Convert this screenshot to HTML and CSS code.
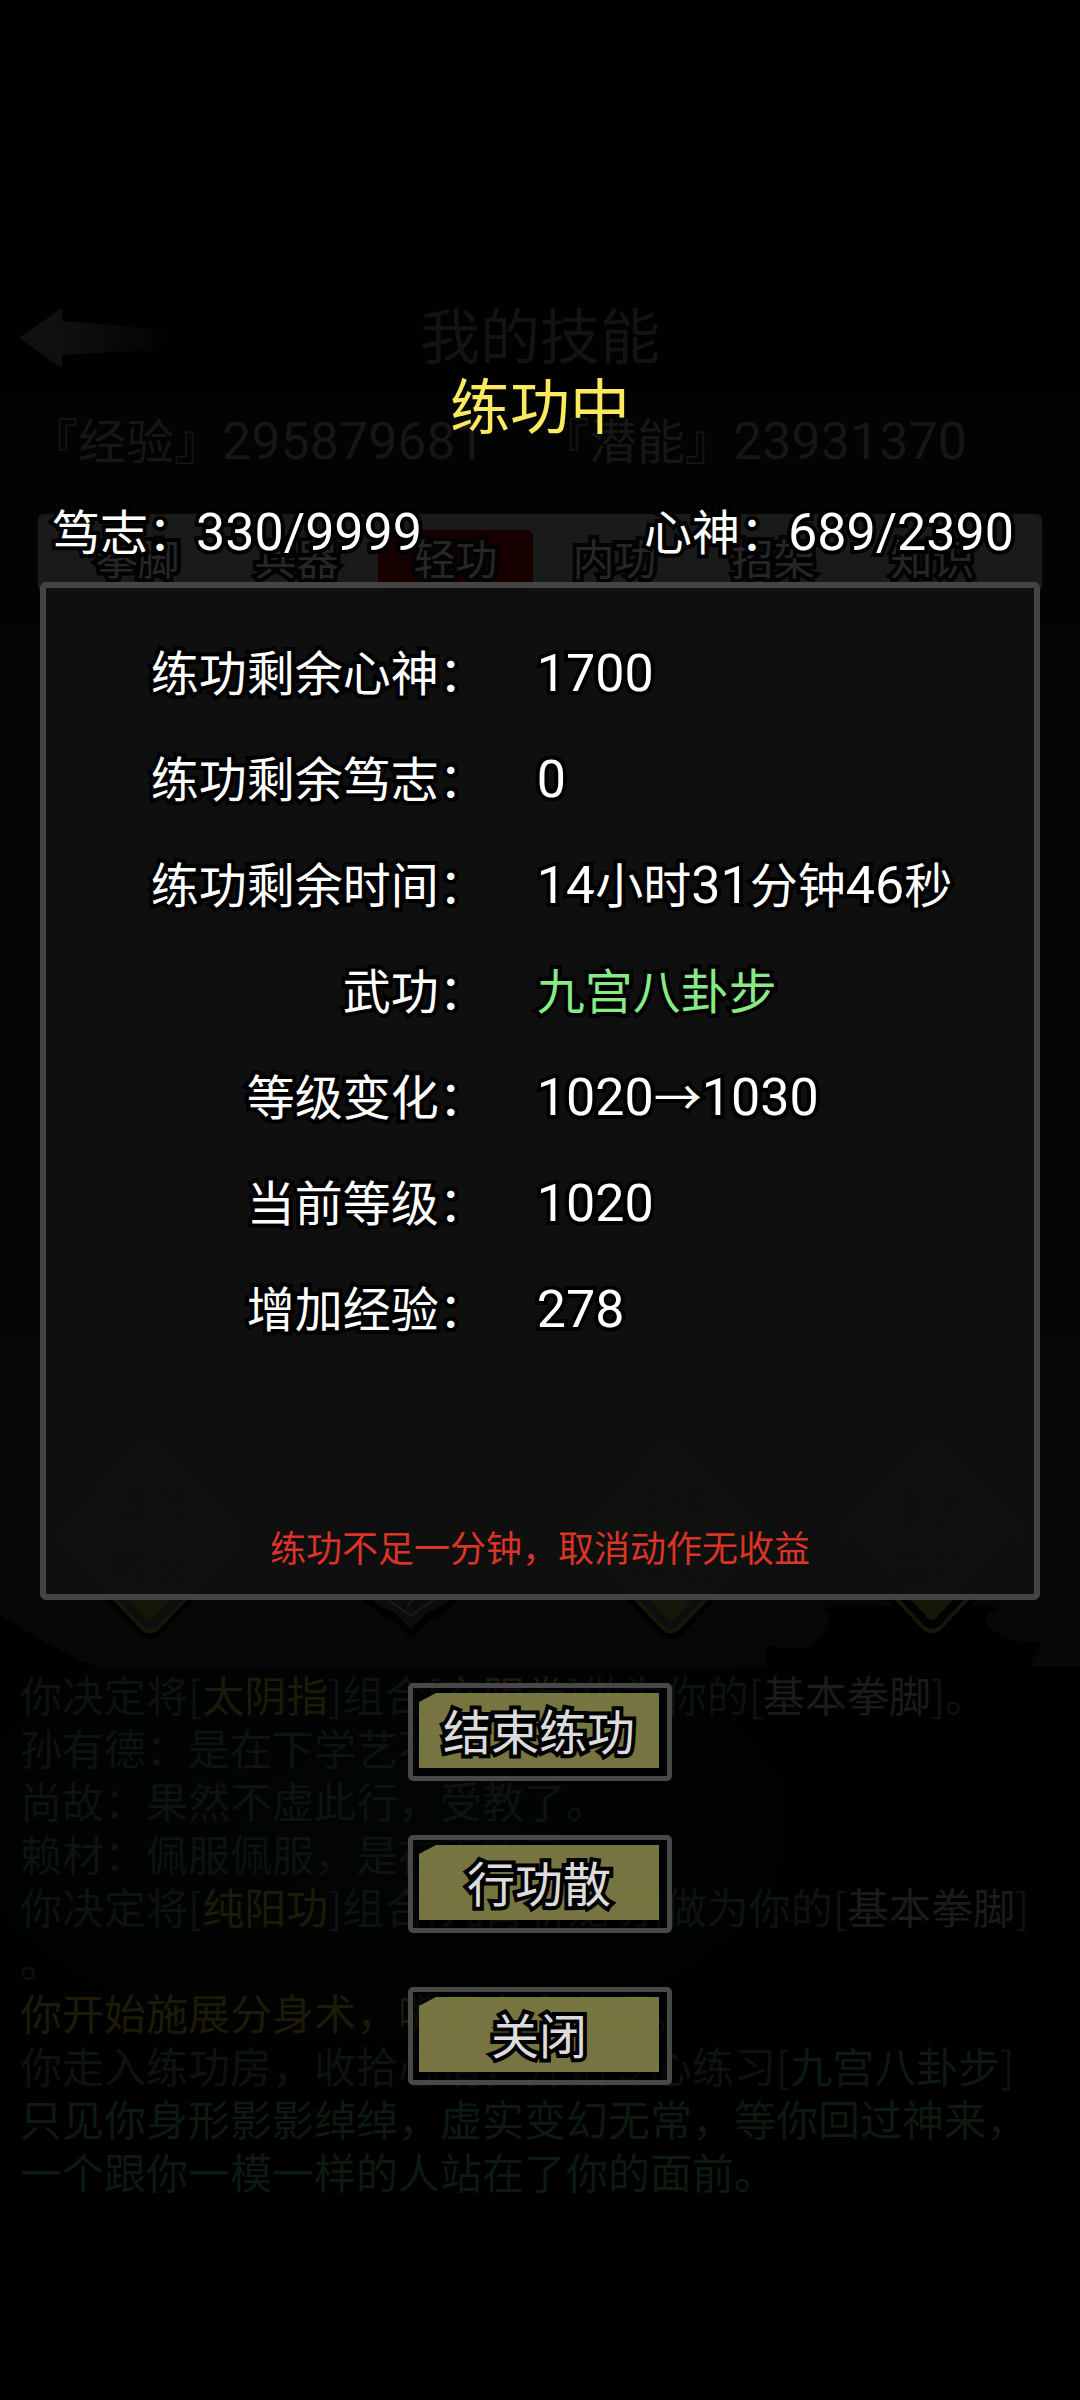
FILE: index.html
```html
<!DOCTYPE html>
<html lang="zh-CN">
	<head>
		<meta charset="UTF-8" />
		<meta name="viewport" content="width=device-width, initial-scale=1.0" />
		<title>练功中</title>
		<link rel="stylesheet" href="styles.css">
	</head>
	<body>
		<div class="game">
			<header class="topbar">
				<a class="back" href="#" aria-label="返回">
					<svg width="150" height="64" viewBox="0 0 150 64">
						<defs>
							<linearGradient id="fade" x1="0" x2="1" y1="0" y2="0">
								<stop offset="0.3" stop-color="#101010" />
								<stop offset="1" stop-color="#020202" />
							</linearGradient>
						</defs>
						<path d="M1 32 L44 2 V15 L146 23 V43 L44 49 V62 Z" fill="url(#fade)" />
					</svg>
				</a>
				<h1>我的技能</h1>
			</header>

			<main class="skills">
				<!-- hills and roof in front of the sky -->
				<svg class="scenery" viewBox="0 0 1080 60" preserveAspectRatio="none">
					<path d="M0 8 L36 30 L80 54 L96 60 H0 Z M766 38 Q790 44 812 40 Q826 26 830 8 L824 0 H1000 L984 10 Q990 34 1040 36 L1030 60 H766 Z" fill="#000" />
				</svg>
				<div class="points">
					<span>『经验』<span class="num">295879681</span></span>
					<span>『潜能』<span class="num">23931370</span></span>
				</div>
				<nav class="tabs">
					<a href="#">拳脚</a>
					<a href="#">兵器</a>
					<a class="active" href="#">轻功</a>
					<a href="#">内功</a>
					<a href="#">招架</a>
					<a href="#">知识</a>
				</nav>
				<table class="list">
					<tr><td>基本轻功</td><td>盖世无双</td><td>1100级</td></tr>
					<tr><td>九宫八卦步</td><td>万夫莫当</td><td>1020级</td></tr>
					<tr><td>无影幻</td><td>盖世无双</td><td>1100级</td></tr>
					<tr><td>千里行</td><td>盖世无双</td><td>1100级</td></tr>
					<tr><td>借步七星</td><td>一代宗师</td><td>1000级</td></tr>
					<tr><td>烟云飘渺步法</td><td>炉火纯青</td><td>980级</td></tr>
					<tr><td>流云随星身法</td><td>初窥门径</td><td>1级</td></tr>
				</table>
				<div class="actions">
					<a class="diamond" href="#">
						<svg viewBox="0 0 200 208"><path d="M92 6 Q100 0 108 6 L194 96 Q200 104 194 112 L110 200 Q100 208 90 200 L6 112 Q0 104 6 96 Z" fill="#161709" stroke="#000" stroke-width="5" /><path d="M14 104 L93 189 Q100 196 107 189 L186 104" fill="none" stroke="#0e0e0c" stroke-width="8" /></svg>
						<span>请师<br>教父</span>
					</a>
					<a class="diamond" href="#">
						<svg viewBox="0 0 200 208"><path d="M100 4 Q130 50 186 104 Q150 175 118 184 L100 202 L82 184 Q50 175 14 104 Q70 50 100 4 Z" fill="#0b0c0c" stroke="#000" stroke-width="7" /><path d="M74 166 L100 184 L126 166 M96 176 L104 164" fill="none" stroke="#191a1c" stroke-width="2" /></svg>
						<span>突<br>破</span>
					</a>
					<a class="diamond" href="#">
						<svg viewBox="0 0 200 208"><path d="M92 6 Q100 0 108 6 L194 96 Q200 104 194 112 L110 200 Q100 208 90 200 L6 112 Q0 104 6 96 Z" fill="#161709" stroke="#000" stroke-width="5" /><path d="M14 104 L93 189 Q100 196 107 189 L186 104" fill="none" stroke="#0e0e0c" stroke-width="8" /></svg>
						<span>正练<br>在功</span>
					</a>
					<a class="diamond" href="#">
						<svg viewBox="0 0 200 208"><path d="M92 6 Q100 0 108 6 L194 96 Q200 104 194 112 L110 200 Q100 208 90 200 L6 112 Q0 104 6 96 Z" fill="#161709" stroke="#000" stroke-width="5" /><path d="M14 104 L93 189 Q100 196 107 189 L186 104" fill="none" stroke="#020202" stroke-width="8" /></svg>
						<span>准武<br>备功</span>
					</a>
				</div>
			</main>

			<div class="log">
				<p>你决定将[<b class="gold">太阴指</b>]组合[<b class="gold">玄阴拳</b>]做为你的[<b class="gray">基本拳脚</b>]。</p>
				<p>孙有德：是在下学艺不精。</p>
				<p>尚故：果然不虚此行，受教了。</p>
				<p>赖材：佩服佩服，是在下输了。</p>
				<p>你决定将[<b class="gold">纯阳功</b>]组合[<b class="gold">九霄斩龙功</b>]做为你的[<b class="gray">基本拳脚</b>]。</p>
				<p class="gold">你开始施展分身术，嘴里念念有词。</p>
				<p>你走入练功房，收拾心情，开始专心练习[<b class="green">九宫八卦步</b>]</p>
				<p class="green">只见你身形影影绰绰，虚实变幻无常，等你回过神来，一个跟你一模一样的人站在了你的面前。</p>
			</div>
		</div>

		<div class="overlay" role="dialog" aria-labelledby="title">
			<h2 id="title">练功中</h2>
			<div class="stats">
				<span>笃志：<span class="num">330/9999</span></span>
				<span>心神：<span class="num">689/2390</span></span>
			</div>
			<div class="panel">
				<dl>
					<dt>练功剩余心神：</dt>
					<dd><span class="num">1700</span></dd>
					<dt>练功剩余笃志：</dt>
					<dd><span class="num">0</span></dd>
					<dt>练功剩余时间：</dt>
					<dd><span class="num">14</span>小时<span class="num">31</span>分钟<span class="num">46</span>秒</dd>
					<dt>武功：</dt>
					<dd class="skill">九宫八卦步</dd>
					<dt>等级变化：</dt>
					<dd><span class="num">1020</span>→<span class="num">1030</span></dd>
					<dt>当前等级：</dt>
					<dd><span class="num">1020</span></dd>
					<dt>增加经验：</dt>
					<dd><span class="num">278</span></dd>
				</dl>
				<p class="warning">练功不足一分钟，取消动作无收益</p>
			</div>
			<div class="buttons">
				<button type="button"><span>结束练功</span></button>
				<button type="button"><span>行功散</span></button>
				<button type="button"><span>关闭</span></button>
			</div>
		</div>
	</body>
</html>
```

FILE: styles.css
```css
* {
	box-sizing: border-box;
}
body {
	position: relative;
	margin: 0;
	min-height: 100vh;
	background-color: #000;
	color: #fff;
	font-family: "Noto Sans CJK SC", sans-serif;
	font-size: 48px;
	line-height: 72px;
}
h1,
h2,
p,
dl,
dd {
	margin: 0;
}
h1,
h2,
b {
	font-weight: normal;
}
a {
	color: inherit;
	text-decoration: none;
}
.num {
	font-family: Roboto, sans-serif;
	font-size: 52px;
	line-height: 1;
}

/* Dimmed game screen */
.game {
	padding-top: 285px;
	color: #161616;
}
.topbar {
	display: grid;
	grid-template-columns: 1fr auto 1fr;
	align-items: center;
	height: 107px;
	padding: 0 18px;
	border-bottom: 2px solid #000;
	background-color: #010101;
}
.back svg {
	display: block;
}
.topbar h1 {
	padding-bottom: 10px;
	font-size: 60px;
	color: #131313;
}
.skills {
	position: relative;
	background: linear-gradient(#020303, #030505 60%, #060808);
}
.points {
	display: flex;
	gap: 56px;
	height: 122px;
	padding: 10px 30px;
	white-space: nowrap;
}
.tabs {
	display: grid;
	grid-template-columns: repeat(6, 1fr);
	gap: 4px;
	height: 78px;
	margin: 0 38px;
	padding: 16px 32px 0 22px;
	border-radius: 6px;
	background-color: #1a1a1a;
	color: #262626;
	font-size: 42px;
	line-height: 53px;
	text-align: center;
	-webkit-text-stroke: 8px #030303;
	paint-order: stroke fill;
}
.tabs .active {
	border-radius: 6px;
	background-color: #160000;
}
.list {
	width: 100%;
	height: 560px;
	margin: 32px 0 246px;
	padding: 0 60px 0 86px;
	border-spacing: 0;
	color: #070707;
}
.list td {
	padding: 0;
	width: 40%;
}
.list td:last-child {
	width: 20%;
	text-align: right;
}
.actions {
	position: relative;
	display: grid;
	grid-template-columns: repeat(4, 1fr);
	height: 237px;
	padding: 0 18px 0 20px;
}
.diamond {
	display: grid;
	justify-items: center;
	align-items: center;
	height: 210px;
	color: #020202;
	font-size: 42px;
	line-height: 60px;
}
.diamond svg,
.diamond span {
	grid-area: 1 / 1;
}
.diamond svg {
	height: 210px;
}
.scenery {
	position: absolute;
	left: 0;
	bottom: 0;
	width: 100%;
	height: 60px;
}
.log {
	padding: 0 20px;
	background: radial-gradient(ellipse at 35% 30%, #030505, #000 60%);
	color: #0d1213;
	font-size: 42px;
	line-height: 53px;
	line-break: anywhere;
}
.gold {
	color: #1d1a07;
}
.gray {
	color: #1b1b1b;
}
.green {
	color: #0c1a10;
}

/* Practice dialog */
.overlay {
	position: absolute;
	top: 0;
	left: 0;
	right: 0;
	padding: 363px 40px 0;
	-webkit-text-stroke: 8px #000;
	paint-order: stroke fill;
}
.overlay h2 {
	color: #fbea60;
	font-size: 60px;
	line-height: 80px;
	text-align: center;
	-webkit-text-stroke: 0;
}
.stats {
	display: flex;
	justify-content: space-between;
	margin: 50px 0 17px;
	padding: 0 26px 0 12px;
}
.panel {
	padding: 29px 0 24px;
	border: 6px solid #444;
	border-radius: 6px;
	background-color: rgba(16, 16, 16, 0.92);
}
.panel dl {
	display: grid;
	grid-template-columns: 47fr 53fr;
	grid-auto-rows: 106px;
	column-gap: 50px;
	line-height: 106px;
}
.panel dt {
	text-align: right;
}
.panel .skill {
	color: #88e987;
}
.warning {
	margin-top: 163px;
	color: #d93427;
	font-size: 36px;
	line-height: 48px;
	text-align: center;
	-webkit-text-stroke: 0;
}
.buttons {
	display: flex;
	flex-direction: column;
	align-items: center;
	gap: 54px;
	margin-top: 83px;
}
button {
	width: 264px;
	height: 98px;
	padding: 5px 8px 8px 6px;
	border: 5px solid #484848;
	border-radius: 5px;
	background-color: rgba(0, 0, 0, 0.5);
	color: #dcdcdc;
	font: inherit;
	-webkit-text-stroke: inherit;
	cursor: pointer;
}
button span {
	display: block;
	height: 75px;
	line-height: 72px;
	background-color: rgba(134, 133, 74, 0.88);
	clip-path: polygon(0 9px, 17px 0, 100% 0, 100% 100%, 0 100%);
}
```
